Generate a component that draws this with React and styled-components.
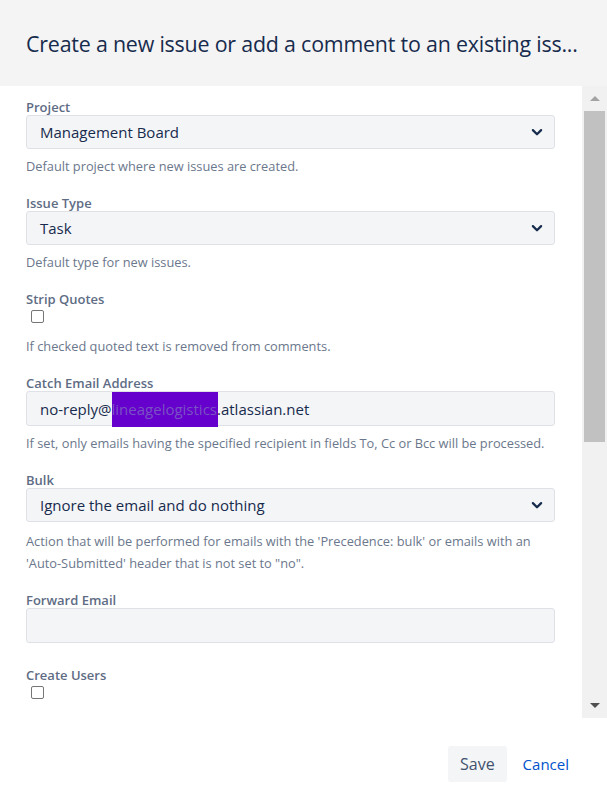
import React from 'react';
import styled, { createGlobalStyle } from 'styled-components';

const GlobalStyle = createGlobalStyle`
  html, body {
    margin: 0;
    padding: 0;
    background: #ffffff;
  }
  body {
    font-family: "Open Sans", "Noto Sans", "Liberation Sans", sans-serif;
    color: #172b4d;
  }
  * {
    box-sizing: border-box;
  }
`;

const Dialog = styled.div`
  width: 607px;
  height: 808px;
  display: flex;
  flex-direction: column;
  background: #ffffff;
  overflow: hidden;
`;

const Header = styled.header`
  height: 86px;
  flex: none;
  background: #f4f4f4;
  display: flex;
  align-items: center;
  padding: 0 20px 0 26px;
`;

const Title = styled.h2`
  margin: 0;
  font-size: 21.4px;
  font-weight: 400;
  color: #172b4d;
  white-space: nowrap;
  letter-spacing: -0.2px;
`;

const Body = styled.div`
  height: 632px;
  flex: none;
  display: flex;
`;

const Content = styled.div`
  flex: 1;
  overflow: hidden;
  padding: 13px 27px 0 26px;
`;

const Field = styled.div`
  display: flex;
  flex-direction: column;
  margin-bottom: ${(p) => p.$spacing || 18}px;
`;

const Label = styled.label`
  font-size: 13px;
  line-height: 16px;
  font-weight: 600;
  color: #5e6c84;
`;

const Control = styled.div`
  height: ${(p) => p.$height || 34}px;
  display: flex;
  align-items: center;
  justify-content: space-between;
  background: #f4f5f7;
  border: 1px solid #dfe1e6;
  border-radius: 3px;
  padding: 0 8px 0 13px;
  font-size: 15px;
  color: #172b4d;
`;

const Value = styled.span`
  white-space: nowrap;
`;

const Redacted = styled.span`
  display: inline-block;
  background: #6600cc;
  color: #7a52c4;
  padding: 7px 1px 8px 0;
  margin: -7px -1px -8px 0;
`;

const Chevron = styled.svg`
  width: 18px;
  height: 18px;
  flex: none;
`;

const Help = styled.div`
  margin-top: ${(p) => p.$gap || 6}px;
  font-size: 12.8px;
  line-height: 22px;
  color: #6b778c;
`;

const CheckRow = styled.div`
  height: 22px;
  padding: 3px 0 0 5px;
`;

const Checkbox = styled.input.attrs({ type: 'checkbox' })`
  appearance: none;
  margin: 0;
  width: 13px;
  height: 13px;
  border: 1px solid #767676;
  border-radius: 2px;
  background: #ffffff;
  display: block;
`;

const Scrollbar = styled.div`
  width: 25px;
  flex: none;
  background: #f1f1f1;
  display: flex;
  flex-direction: column;
`;

const ScrollButton = styled.div`
  height: 25px;
  flex: none;
  display: flex;
  align-items: center;
  justify-content: center;
`;

const Arrow = styled.div`
  width: 0;
  height: 0;
  border-left: 5px solid transparent;
  border-right: 5px solid transparent;
  ${(p) =>
    p.$down
      ? `border-top: 5px solid ${p.$color};`
      : `border-bottom: 5px solid ${p.$color};`}
`;

const Track = styled.div`
  flex: 1;
  display: flex;
  flex-direction: column;
`;

const Thumb = styled.div`
  height: 331px;
  margin: 0 2px;
  background: #c1c1c1;
`;

const Footer = styled.footer`
  flex: 1;
  display: flex;
  justify-content: flex-end;
  align-items: flex-start;
  gap: 16px;
  padding: 28px 38px 0 0;
`;

const Button = styled.button`
  height: 36px;
  padding: 0 12px;
  border: none;
  border-radius: 3px;
  background: #f4f5f7;
  color: #42526e;
  font-family: inherit;
  font-size: 16px;
`;

const LinkButton = styled.a`
  height: 36px;
  display: flex;
  align-items: center;
  color: #0052cc;
  font-size: 15px;
  text-decoration: none;
`;

const ChevronIcon = () => (
  <Chevron viewBox="0 0 24 24" fill="none">
    <path d="M6.5 9.5l5.5 5.5 5.5-5.5" stroke="#172b4d" strokeWidth="3" strokeLinecap="round" strokeLinejoin="round" />
  </Chevron>
);

const SelectField = ({ label, value, help, helpGap }) => (
  <Field>
    <Label>{label}</Label>
    <Control>
      <Value>{value}</Value>
      <ChevronIcon />
    </Control>
    {help && <Help $gap={helpGap}>{help}</Help>}
  </Field>
);

const CheckField = ({ label, help }) => (
  <Field>
    <Label>{label}</Label>
    <CheckRow>
      <Checkbox />
    </CheckRow>
    {help && <Help>{help}</Help>}
  </Field>
);

export default function App() {
  return (
    <>
      <GlobalStyle />
      <Dialog>
        <Header>
          <Title>Create a new issue or add a comment to an existing iss...</Title>
        </Header>
        <Body>
          <Content>
            <SelectField
              label="Project"
              value="Management Board"
              help="Default project where new issues are created."
            />
            <SelectField
              label="Issue Type"
              value="Task"
              help="Default type for new issues."
            />
            <CheckField
              label="Strip Quotes"
              help="If checked quoted text is removed from comments."
            />
            <Field>
              <Label>Catch Email Address</Label>
              <Control $height={35}>
                <Value>
                  no-reply@<Redacted>lineagelogistics</Redacted>.atlassian.net
                </Value>
              </Control>
              <Help>
                If set, only emails having the specified recipient in fields To, Cc or Bcc will be processed.
              </Help>
            </Field>
            <SelectField
              label="Bulk"
              value="Ignore the email and do nothing"
              helpGap={8}
              help={
                <>
                  Action that will be performed for emails with the 'Precedence: bulk' or emails with an
                  'Auto-Submitted' header that is not set to "no".
                </>
              }
            />
            <Field $spacing={24}>
              <Label>Forward Email</Label>
              <Control $height={35} />
            </Field>
            <CheckField label="Create Users" />
          </Content>
          <Scrollbar>
            <ScrollButton>
              <Arrow $color="#a3a3a3" />
            </ScrollButton>
            <Track>
              <Thumb />
            </Track>
            <ScrollButton>
              <Arrow $down $color="#505050" />
            </ScrollButton>
          </Scrollbar>
        </Body>
        <Footer>
          <Button>Save</Button>
          <LinkButton href="#">Cancel</LinkButton>
        </Footer>
      </Dialog>
    </>
  );
}
